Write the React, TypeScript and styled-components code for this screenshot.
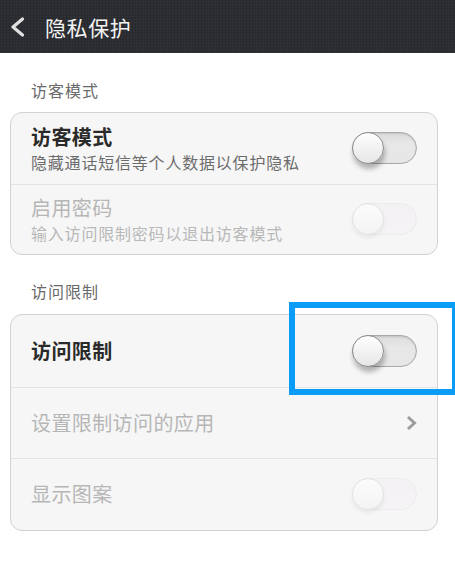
import React from 'react';
import styled, {createGlobalStyle} from 'styled-components';

const GlobalStyle = createGlobalStyle`
    html, body {
        margin: 0;
        padding: 0;
        background: #fff;
        overflow: hidden;
    }
    body {
        font-family: "Noto Sans CJK SC", "Noto Sans", sans-serif;
    }
`;

interface I_ToggleProps {
    disabled?: boolean
}

const Toggle: React.FC<I_ToggleProps> = ({disabled}) => (
    <Track $disabled={disabled}>
        <Knob $disabled={disabled}/>
    </Track>
);

const BackIcon = () => (
    <svg width="15" height="20" viewBox="0 0 15 20">
        <polyline points="12.5,2 3,10 12.5,18" fill="none" stroke="#e0e0e0" strokeWidth="3.2" strokeLinecap="round" strokeLinejoin="round"/>
    </svg>
);

const ChevronRight = () => (
    <svg width="11" height="16" viewBox="0 0 11 16">
        <polyline points="2,2 8.5,8 2,14" fill="none" stroke="#9c9c9c" strokeWidth="3" strokeLinejoin="miter"/>
    </svg>
);

const App: React.FC = () => {
    return (
        <Page>
            <GlobalStyle/>
            <Header>
                <BackIcon/>
                <HeaderTitle>隐私保护</HeaderTitle>
            </Header>

            <SectionTitle>访客模式</SectionTitle>
            <Card>
                <Row $tall>
                    <RowText>
                        <RowTitle $bold>访客模式</RowTitle>
                        <RowSub>隐藏通话短信等个人数据以保护隐私</RowSub>
                    </RowText>
                    <Toggle/>
                </Row>
                <Row $tall>
                    <RowText>
                        <RowTitle $disabled>启用密码</RowTitle>
                        <RowSub $disabled>输入访问限制密码以退出访客模式</RowSub>
                    </RowText>
                    <Toggle disabled/>
                </Row>
            </Card>

            <SectionTitle $second>访问限制</SectionTitle>
            <Card>
                <Row>
                    <RowTitle $bold>访问限制</RowTitle>
                    <Toggle/>
                </Row>
                <Row>
                    <RowTitle $disabled>设置限制访问的应用</RowTitle>
                    <ChevronRight/>
                </Row>
                <Row>
                    <RowTitle $disabled>显示图案</RowTitle>
                    <Toggle disabled/>
                </Row>
            </Card>

            <Highlight/>
        </Page>
    );
};

export default App;

const Page = styled.div`
    position: relative;
    width: 455px;
    height: 564px;
    overflow: hidden;
    background: #fff;
`;

const Header = styled.div`
    height: 53px;
    display: flex;
    align-items: center;
    gap: 20px;
    padding: 1px 0 0 10px;
    box-sizing: border-box;
    background-color: #2b2d32;
    background-image:
        repeating-linear-gradient(0deg, rgba(255,255,255,0.025) 0 1px, transparent 1px 3px),
        repeating-linear-gradient(90deg, rgba(0,0,0,0.12) 0 1px, transparent 1px 3px);
`;

const HeaderTitle = styled.div`
    color: #f4f4f4;
    font-size: 21px;
    letter-spacing: 0.6px;
    line-height: 26px;
`;

const SectionTitle = styled.div<{ $second?: boolean }>`
    padding: ${p => p.$second ? '27px 31px 13px' : '28px 31px 12px'};
    font-size: 16px;
    line-height: 19px;
    letter-spacing: 1px;
    color: #6a6a6a;
`;

const Card = styled.div`
    margin: 0 17px 0 10px;
    border: 1px solid #d2d2d2;
    border-radius: 12px;
    background: #f6f6f6;
    overflow: hidden;
`;

const Row = styled.div<{ $tall?: boolean }>`
    height: ${p => p.$tall ? '70.5px' : '71.5px'};
    display: flex;
    align-items: center;
    justify-content: space-between;
    padding: 0 20px;
    box-sizing: border-box;
    & + & {
        border-top: 1px solid #e4e4e4;
    }
`;

const RowText = styled.div`
    display: flex;
    flex-direction: column;
    gap: 3px;
`;

const RowTitle = styled.div<{ $bold?: boolean, $disabled?: boolean }>`
    font-size: 20px;
    line-height: 24px;
    letter-spacing: 0.4px;
    font-weight: ${p => p.$bold ? 700 : 400};
    color: ${p => p.$disabled ? '#b6b6b6' : '#2a2a2a'};
`;

const RowSub = styled.div<{ $disabled?: boolean }>`
    font-size: 16px;
    line-height: 20px;
    letter-spacing: 0.8px;
    color: ${p => p.$disabled ? '#b8b8b8' : '#6c6c6c'};
`;

const Track = styled.div<{ $disabled?: boolean }>`
    position: relative;
    width: 65px;
    height: 32px;
    box-sizing: border-box;
    border-radius: 16px;
    border: 1px solid ${p => p.$disabled ? '#ececec' : '#a9a9a9'};
    background: ${p => p.$disabled
        ? 'linear-gradient(#f3f1f3, #f5f3f5)'
        : 'linear-gradient(#dcdcdc, #e8e8e8 40%, #e6e6e6)'};
    box-shadow: ${p => p.$disabled ? 'none' : 'inset 0 1px 2px rgba(0,0,0,0.12)'};
`;

const Knob = styled.div<{ $disabled?: boolean }>`
    position: absolute;
    left: -1px;
    top: -1px;
    width: 32px;
    height: 32px;
    box-sizing: border-box;
    border-radius: 50%;
    border: 1px solid ${p => p.$disabled ? '#e2e2e2' : '#8f8f8f'};
    background: ${p => p.$disabled
        ? 'linear-gradient(#fbfbfb, #f4f4f4)'
        : 'linear-gradient(#ffffff, #f2f2f2 50%, #e6e6e6)'};
    box-shadow: ${p => p.$disabled
        ? '0 3px 4px rgba(0,0,0,0.06)'
        : '1px 5px 5px rgba(0,0,0,0.28)'};
`;

const Highlight = styled.div`
    position: absolute;
    left: 289px;
    top: 302px;
    width: 169px;
    height: 93px;
    box-sizing: border-box;
    border: 6px solid #0a9cf6;
    pointer-events: none;
`;
